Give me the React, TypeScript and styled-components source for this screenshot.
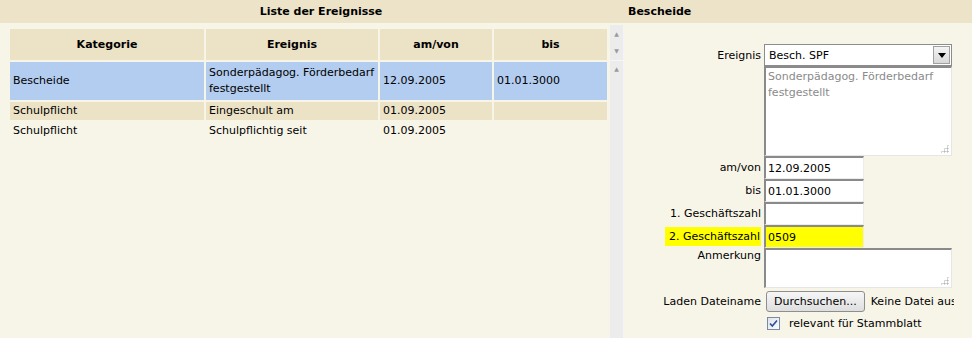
import React from "react";
import styled, { createGlobalStyle } from "styled-components";

const GlobalStyle = createGlobalStyle`
  html, body {
    margin: 0;
    padding: 0;
    background: #f7f4e8;
  }
  body {
    font-family: "DejaVu Sans", Verdana, sans-serif;
    font-size: 11px;
    color: #000;
  }
`;

type Row = { kategorie: string; ereignis: string; von: string; bis: string; tone: "selected" | "odd" | "even" };

const rows: Row[] = [
  { kategorie: "Bescheide", ereignis: "Sonderpädagog. Förderbedarf festgestellt", von: "12.09.2005", bis: "01.01.3000", tone: "selected" },
  { kategorie: "Schulpflicht", ereignis: "Eingeschult am", von: "01.09.2005", bis: "", tone: "odd" },
  { kategorie: "Schulpflicht", ereignis: "Schulpflichtig seit", von: "01.09.2005", bis: "", tone: "even" },
];

export default function App() {
  return (
    <>
      <GlobalStyle />
      <Page>
        <LeftPane>
          <TitleBar $center>Liste der Ereignisse</TitleBar>
          <ListArea>
            <Table>
              <colgroup>
                <col style={{ width: 194 }} />
                <col style={{ width: 172 }} />
                <col style={{ width: 112 }} />
                <col style={{ width: 113 }} />
              </colgroup>
              <thead>
                <tr>
                  <Th>Kategorie</Th>
                  <Th>Ereignis</Th>
                  <Th>am/von</Th>
                  <Th>bis</Th>
                </tr>
              </thead>
              <tbody>
                {rows.map((r, i) => (
                  <Tr key={i} $tone={r.tone}>
                    <Td>{r.kategorie}</Td>
                    <Td>{r.ereignis}</Td>
                    <Td>{r.von}</Td>
                    <Td>{r.bis}</Td>
                  </Tr>
                ))}
              </tbody>
            </Table>
            <ScrollBar>
              <ScrollHead>
                <Arrow>▲</Arrow>
                <Arrow>▼</Arrow>
              </ScrollHead>
              <ScrollTrack>
                <Arrow>▲</Arrow>
              </ScrollTrack>
            </ScrollBar>
          </ListArea>
        </LeftPane>

        <RightPane>
          <TitleBar>Bescheide</TitleBar>
          <Form>
            <Label>Ereignis</Label>
            <Select>
              <span>Besch. SPF</span>
              <SelectButton>
                <svg width="8" height="5" viewBox="0 0 8 5">
                  <path d="M0 0h8L4 5z" fill="#000" />
                </svg>
              </SelectButton>
            </Select>

            <Label />
            <AreaBox $height={90}>
              <Area readOnly value={"Sonderpädagog. Förderbedarf\nfestgestellt"} $muted />
              <Grip />
            </AreaBox>

            <Label>am/von</Label>
            <Field readOnly value="12.09.2005" />

            <Label>bis</Label>
            <Field readOnly value="01.01.3000" />

            <Label>1. Geschäftszahl</Label>
            <Field readOnly value="" />

            <Label><Mark>2. Geschäftszahl</Mark></Label>
            <Field readOnly value="0509" $highlight />

            <Label $top>Anmerkung</Label>
            <AreaBox $height={40}>
              <Area readOnly value="" />
              <Grip />
            </AreaBox>

            <Label>Laden Dateiname</Label>
            <FileRow>
              <Button>Durchsuchen...</Button>
              <span>Keine Datei ausgewählt.</span>
            </FileRow>

            <Label />
            <CheckRow>
              <Check>
                <svg width="9" height="9" viewBox="0 0 9 9">
                  <path d="M1 4.5l2.3 2.5L8 1.5" stroke="#2a4f9c" strokeWidth="1.6" fill="none" />
                </svg>
              </Check>
              relevant für Stammblatt
            </CheckRow>
          </Form>
        </RightPane>
      </Page>
    </>
  );
}

const Page = styled.div`
  display: flex;
  width: 972px;
  height: 338px;
  overflow: hidden;
`;

const LeftPane = styled.div`
  width: 624px;
  display: flex;
  flex-direction: column;
`;

const RightPane = styled.div`
  flex: 1;
  display: flex;
  flex-direction: column;
  min-width: 0;
`;

const TitleBar = styled.div<{ $center?: boolean }>`
  height: 23px;
  line-height: 23px;
  background: #ece3c9;
  font-weight: bold;
  font-size: 11px;
  text-align: ${(p) => (p.$center ? "center" : "left")};
  padding-left: ${(p) => (p.$center ? "18px" : "4px")};
`;

const ListArea = styled.div`
  flex: 1;
  display: flex;
  padding-top: 4px;
`;

const Table = styled.table`
  border-spacing: 2px;
  margin-left: 8px;
  width: 599px;
  table-layout: fixed;
  align-self: flex-start;
  font-size: 11px;
`;

const Th = styled.th`
  background: #ece2c6;
  height: 31px;
  padding: 0 3px;
  font-weight: bold;
  text-align: center;
`;

const Tr = styled.tr<{ $tone: "selected" | "odd" | "even" }>`
  background: ${(p) => (p.$tone === "selected" ? "#b3cdf0" : p.$tone === "odd" ? "#ece2c6" : "transparent")};
  height: ${(p) => (p.$tone === "selected" ? "38px" : "18px")};
`;

const Td = styled.td`
  padding: 0 3px;
  line-height: 16px;
  vertical-align: middle;
`;

const ScrollBar = styled.div`
  width: 16px;
  margin-left: 1px;
  margin-top: -2px;
  display: flex;
  flex-direction: column;
  background: #ececec;
  border-right: 1px solid #f4f4f4;
`;

const ScrollHead = styled.div`
  height: 35px;
  display: flex;
  flex-direction: column;
  align-items: center;
  justify-content: space-around;
  border-bottom: 1px solid #f6f6f6;
`;

const ScrollTrack = styled.div`
  flex: 1;
  display: flex;
  flex-direction: column;
  align-items: center;
  padding-top: 4px;
`;

const Arrow = styled.span`
  font-size: 6px;
  color: #9a9a9a;
  line-height: 8px;
`;

const Form = styled.div`
  display: grid;
  grid-template-columns: 137px 190px;
  column-gap: 3px;
  align-items: center;
  padding-top: 21px;
  width: 330px;
  overflow: hidden;
`;

const Label = styled.div<{ $top?: boolean }>`
  text-align: right;
  align-self: ${(p) => (p.$top ? "start" : "center")};
  padding-top: ${(p) => (p.$top ? "1px" : "0")};
  white-space: nowrap;
`;

const Mark = styled.span`
  background: #ffff00;
  padding: 3px 1px 3px 4px;
`;

const Select = styled.div`
  height: 22px;
  width: 188px;
  box-sizing: border-box;
  border: 1px solid #8c8c8c;
  background: #fff;
  display: flex;
  align-items: center;
  justify-content: space-between;
  padding-left: 4px;
`;

const SelectButton = styled.div`
  width: 17px;
  height: 18px;
  margin-right: 1px;
  box-sizing: border-box;
  border: 1px solid #a0a0a0;
  background: linear-gradient(#f4f4f4, #d8d8d8);
  display: flex;
  align-items: center;
  justify-content: center;
`;

const AreaBox = styled.div<{ $height: number }>`
  position: relative;
  width: 188px;
  height: ${(p) => p.$height}px;
`;

const Area = styled.textarea<{ $muted?: boolean }>`
  width: 100%;
  height: 100%;
  box-sizing: border-box;
  resize: none;
  border-style: solid;
  border-width: 2px 1px 1px 2px;
  border-color: #8a8a8a #e6e6e6 #e6e6e6 #8a8a8a;
  background: #fff;
  font-family: inherit;
  font-size: 11px;
  line-height: 16px;
  padding: 1px 2px;
  color: ${(p) => (p.$muted ? "#8a8a8a" : "#000")};
  outline: none;
  overflow: hidden;
`;

const Grip = styled.div`
  position: absolute;
  right: 3px;
  bottom: 3px;
  width: 9px;
  height: 9px;
  background-image: radial-gradient(#b4b4b4 45%, transparent 50%);
  background-size: 3px 3px;
  clip-path: polygon(100% 0, 100% 100%, 0 100%);
`;

const Field = styled.input<{ $highlight?: boolean }>`
  width: 100px;
  height: 23px;
  box-sizing: border-box;
  border-style: solid;
  border-width: 2px 1px 1px 2px;
  border-color: #8a8a8a #ececec #ececec #8a8a8a;
  background: ${(p) => (p.$highlight ? "#ffff00" : "#fff")};
  font-family: inherit;
  font-size: 11px;
  padding: 0 2px;
  outline: none;
`;

const FileRow = styled.div`
  display: flex;
  align-items: center;
  gap: 6px;
  white-space: nowrap;
  padding: 3px 0 3px 2px;
`;

const Button = styled.button`
  height: 21px;
  padding: 0 7px;
  border: 1px solid #8e8e8e;
  border-radius: 3px;
  background: linear-gradient(#f6f6f6, #dedede);
  font-family: inherit;
  font-size: 11px;
  color: #000;
`;

const CheckRow = styled.div`
  display: flex;
  align-items: center;
  gap: 9px;
  padding: 2px 0 0 3px;
`;

const Check = styled.span`
  width: 11px;
  height: 11px;
  border: 1px solid #7a8aa6;
  background: linear-gradient(135deg, #dfe3ea, #fbfbfb);
  display: flex;
  align-items: center;
  justify-content: center;
`;
